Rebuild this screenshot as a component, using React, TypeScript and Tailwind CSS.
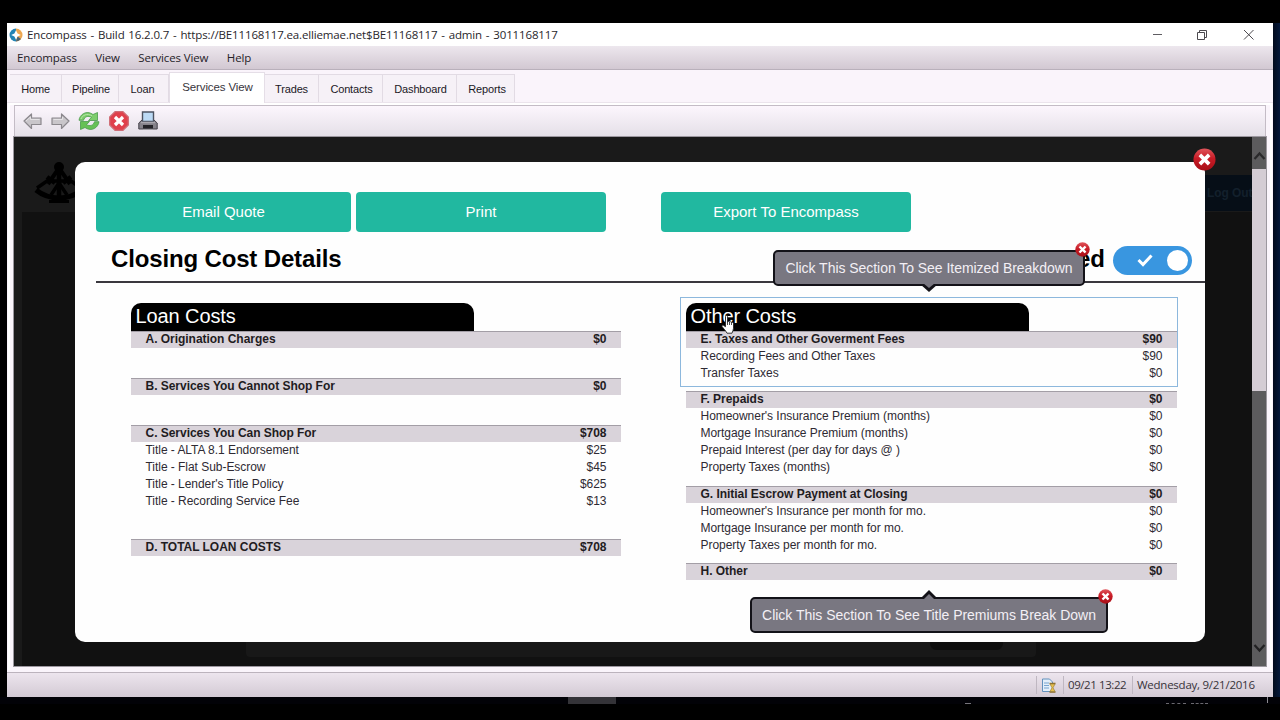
import React from "react";

type Line = { label: string; amount: string };
type Section = { title: string; amount: string; lines: Line[]; box: string };

const loanCosts: Section[] = [
  { title: "A. Origination Charges", amount: "$0", lines: [], box: "h-[47px]" },
  { title: "B. Services You Cannot Shop For", amount: "$0", lines: [], box: "h-[47px]" },
  {
    title: "C. Services You Can Shop For",
    amount: "$708",
    lines: [
      { label: "Title - ALTA 8.1 Endorsement", amount: "$25" },
      { label: "Title - Flat Sub-Escrow", amount: "$45" },
      { label: "Title - Lender's Title Policy", amount: "$625" },
      { label: "Title - Recording Service Fee", amount: "$13" },
    ],
    box: "h-[114px]",
  },
  { title: "D. TOTAL LOAN COSTS", amount: "$708", lines: [], box: "h-[18px]" },
];

const otherCosts: Section[] = [
  {
    title: "E. Taxes and Other Goverment Fees",
    amount: "$90",
    lines: [
      { label: "Recording Fees and Other Taxes", amount: "$90" },
      { label: "Transfer Taxes", amount: "$0" },
    ],
    box: "h-[60px]",
  },
  {
    title: "F. Prepaids",
    amount: "$0",
    lines: [
      { label: "Homeowner's Insurance Premium (months)", amount: "$0" },
      { label: "Mortgage Insurance Premium (months)", amount: "$0" },
      { label: "Prepaid Interest (per day for days @ )", amount: "$0" },
      { label: "Property Taxes (months)", amount: "$0" },
    ],
    box: "h-[95px]",
  },
  {
    title: "G. Initial Escrow Payment at Closing",
    amount: "$0",
    lines: [
      { label: "Homeowner's Insurance per month for mo.", amount: "$0" },
      { label: "Mortgage Insurance per month for mo.", amount: "$0" },
      { label: "Property Taxes per month for mo.", amount: "$0" },
    ],
    box: "h-[77px]",
  },
  { title: "H. Other", amount: "$0", lines: [], box: "h-[18px]" },
];

function CostColumn({ title, sections, width }: { title: string; sections: Section[]; width: string }) {
  return (
    <div className={width}>
      <div className="flex h-[28px] w-[343px] items-center rounded-t-[10px] bg-black pb-[2px] pl-[4.500px] text-[20px] leading-none tracking-[-0.1px] text-white">
        {title}
      </div>
      {sections.map((s) => (
        <div key={s.title} className={s.box}>
          <div className="flex h-[17px] items-center justify-between border-t border-[#a39ea6] bg-[#d9d3da] pr-[14.500px] pb-[1.500px] pl-[14.500px] text-[12px] font-bold tracking-[-0.03px] text-[#1f1c22]">
            <span>{s.title}</span>
            <span>{s.amount}</span>
          </div>
          {s.lines.map((l) => (
            <div key={l.label} className="flex h-[16.8px] items-center justify-between pr-[14.500px] pl-[14.500px] text-[12px] tracking-[-0.04px] text-[#2e2a33]">
              <span>{l.label}</span>
              <span>{l.amount}</span>
            </div>
          ))}
        </div>
      ))}
    </div>
  );
}

function CloseBadge({ className }: { className: string }) {
  return (
    <svg viewBox="0 0 24 24" className={className}>
      <defs>
        <linearGradient id="badge" x1="0" y1="0" x2="0" y2="1">
          <stop offset="0" stopColor="#e0555b" />
          <stop offset="0.45" stopColor="#c81c26" />
          <stop offset="1" stopColor="#a80f18" />
        </linearGradient>
      </defs>
      <circle cx="12" cy="12" r="11.5" fill="url(#badge)" />
      <path d="M8.500 8.500l7 7M15.500 8.500l-7 7" stroke="#fff" strokeWidth="3.800" strokeLinecap="square" />
    </svg>
  );
}

function ToolbarIcons() {
  return (
    <>
      <svg viewBox="0 0 20 20" className="size-[20px]">
        <path d="M1 10l7.500-7v4H18v6.500H8.500v4z" fill="#c9c6ca" stroke="#8b888d" strokeWidth="1.2" strokeLinejoin="round" />
        <path d="M3 10l4.500-4v2.500h9" fill="none" stroke="#e4e2e5" />
      </svg>
      <svg viewBox="0 0 20 20" className="ml-[7px] size-[20px]">
        <path d="M19 10l-7.500-7v4H2v6.500h9.500v4z" fill="#c9c6ca" stroke="#8b888d" strokeWidth="1.2" strokeLinejoin="round" />
        <path d="M3.500 8.500h9V6" fill="none" stroke="#e4e2e5" />
      </svg>
      <svg viewBox="0 0 22 20" className="ml-[8px] h-[20px] w-[22px]">
        <path d="M1 9.300C1.500 4 8-1.500 15 3.500L19.500 1.500V9.500H10.500L13.500 6.300C10 4.500 6.500 5.500 5.500 9.300z" fill="#7dcd6c" stroke="#4a9a4c" strokeWidth="0.8" strokeLinejoin="round" />
        <path d="M21 10.700C20.500 16 14 21.500 7 16.500L2.500 18.500V10.500H11.500L8.500 13.700C12 15.500 15.500 14.500 16.500 10.700z" fill="#66c156" stroke="#4a9a4c" strokeWidth="0.8" strokeLinejoin="round" />
        <path d="M3 8C4.500 4 9 2 14 4.800" fill="none" stroke="#b5e6a9" />
      </svg>
      <svg viewBox="0 0 20 20" className="ml-[9px] size-[20px]">
        <path d="M6 .7h8L19.300 6v8L14 19.300H6L.7 14V6z" fill="#e0404c" stroke="#cf6d76" strokeWidth="1.300" strokeLinejoin="round" />
        <path d="M6 6l8 8M14 6l-8 8" stroke="#fff" strokeWidth="3.200" />
      </svg>
      <svg viewBox="0 0 20 20" className="ml-[9px] size-[20px]">
        <path d="M4 9L.8 12V18h18.400v-6L16 9z" fill="#85828a" stroke="#45424a" />
        <path d="M4.500 1h11v9.500h-11z" fill="#bcdaf5" stroke="#4c5361" strokeWidth="1.400" />
        <path d="M3 11.500h14" stroke="#aaa7ae" strokeWidth="1.500" />
        <path d="M5 14h10v3.500H5z" fill="#242328" />
        <path d="M5 18.500h10" stroke="#a3a1a6" />
      </svg>
    </>
  );
}

function Tab({ label, width }: { label: string; width: string }) {
  return (
    <div className={`mt-[4px] flex h-[28px] items-center justify-center border-t border-r border-[#e2dbe4] bg-[#f6f1f7] pt-[1px] text-[11px] tracking-[-0.15px] text-[#1b181f] ${width}`}>
      {label}
    </div>
  );
}

export default function App() {
  return (
    <div className="relative flex h-[720px] w-[1280px] flex-col overflow-hidden bg-black pt-[23px] font-['Liberation_Sans',sans-serif]">
      <div className="flex h-[674px]">
        <div className="ml-[7px] flex w-[1266px] flex-col bg-[#faf4fb]">
          {/* Title bar */}
          <div className="flex h-[23px] shrink-0 items-center bg-white pl-[2px] font-['Open_Sans','Noto_Sans',sans-serif]">
            <svg viewBox="0 0 14 14" className="size-[14px]">
              <path d="M7 .5A6.500 6.500 0 0 0 .5 7 6.500 6.500 0 0 0 7 13.500z" fill="#2384b4" />
              <path d="M7 .5A6.500 6.500 0 0 1 13.500 7 6.500 6.500 0 0 1 7 13.500z" fill="#eda750" />
              <path d="M7 13.500a6.500 6.500 0 0 0 5-2.400L8 8z" fill="#4d6674" />
              <path d="M7 2.200l1.600 3.200L11.800 7 8.600 8.600 7 11.800 5.400 8.600 2.200 7l3.200-1.600z" fill="#fff" />
            </svg>
            <span className="ml-[4px] text-[11.500px] tracking-[-0.14px] whitespace-pre text-[#28262b] [word-spacing:1px]">Encompass - Build 16.2.0.7 - https://BE11168117.ea.elliemae.net$BE11168117 - admin - 3011168117</span>
            <svg viewBox="0 0 102 12" className="mr-[18px] ml-auto h-[12px] w-[102px]" fill="none" stroke="#4b494e">
              <path d="M-1 5.500h10" stroke="#5f5d62" />
              <path d="M44.500 3.500h7v7h-7zM46.500 3.500v-2h7v7h-2" />
              <path d="M91 1l9.500 9.500M100.500 1L91 10.500" />
            </svg>
          </div>
          {/* Menu bar */}
          <div className="flex h-[24px] shrink-0 items-center gap-[18.500px] border-b border-[#b9b0bb] bg-gradient-to-b from-[#ede7ee] to-[#d2c8d2] pl-[10px] font-['Open_Sans','Noto_Sans',sans-serif] text-[11.500px] tracking-[-0.13px] text-[#252228]">
            <span>Encompass</span>
            <span>View</span>
            <span>Services View</span>
            <span>Help</span>
          </div>
          {/* Tabs */}
          <div className="flex h-[33px] shrink-0 items-start border-b border-[#ebe4ec] pl-[3px]">
            <Tab label="Home" width="w-[52px]" />
            <Tab label="Pipeline" width="w-[57px] pl-[2px]" />
            <Tab label="Loan" width="w-[50px] pr-[2px]" />
            <div className="mt-[2px] flex h-[32px] w-[96px] items-center justify-center border border-b-0 border-[#e5dee7] bg-white pb-[2px] pl-[1px] text-[11.500px] tracking-[-0.12px] text-[#38353c]">
              Services View
            </div>
            <Tab label="Trades" width="w-[54px]" />
            <Tab label="Contacts" width="w-[64px] pl-[2px]" />
            <Tab label="Dashboard" width="w-[74px] pl-[2px]" />
            <Tab label="Reports" width="w-[58px] pl-[3px]" />
          </div>
          {/* Browser frame */}
          <div className="mx-[1px] h-[567px] shrink-0 border-x-2 border-t-2 border-white px-[4px]">
            <div className="flex h-[32px] items-center border border-b-0 border-[#c4bcc6] bg-gradient-to-b from-[#fcf6fd] to-[#e4dfe7] pb-[1px] pl-[8px]">
              <ToolbarIcons />
            </div>
            <div className="relative flex h-[529px] bg-[#111] outline-1 outline-[#9c979f]">
              <div className="relative w-[1238px] overflow-hidden bg-[#1a1a1a]">
                <div className="absolute top-[75px] left-[8px] h-[460px] w-[1240px] bg-[#111]" />
                <div className="absolute top-[500px] left-[232px] h-[20px] w-[790px] rounded-sm bg-[#181818]" />
                <div className="absolute top-[500px] left-[916px] h-[13px] w-[73px] rounded-full bg-[#0e0e0e]" />
                <svg viewBox="0 0 50 42" className="absolute top-[25px] left-[20px] h-[42px] w-[50px]" fill="none" stroke="#000">
                  <path d="M25 6L14 22M25 6l11 16" strokeWidth="4" />
                  <circle cx="25" cy="5" r="3.500" fill="#000" strokeWidth="3" />
                  <path d="M25 5v32M13 15l8 6M37 15l-8 6" strokeWidth="4.500" />
                  <path d="M2 28q10 8 23 8t23-8" strokeWidth="5" />
                  <path d="M3 26l10-7h24l10 7M25 21l-8 12M25 21l8 12" strokeWidth="3.500" />
                  <path d="M15 39.500h20" strokeWidth="3" />
                </svg>
                <div className="absolute top-[38px] left-[1182px] flex h-[36px] w-[60px] items-center bg-[#060e17] pl-[11px] text-[12px] font-bold tracking-[-0.1px] whitespace-nowrap text-[#13202c]">
                  Log Out
                </div>
              </div>
              <div className="flex w-[14px] flex-col items-center bg-[#5c5b5d]">
                <svg viewBox="0 0 14 32" className="h-[32px] w-[14px] shrink-0" fill="none" stroke="#2a292b" strokeWidth="2.200">
                  <path d="M2.500 22L7.500 16.500L12.500 22" />
                </svg>
                <div className="h-[222px] w-[14px] bg-[#d4ccd4]" />
                <svg viewBox="0 0 14 32" className="mt-auto h-[32px] w-[14px] shrink-0" fill="none" stroke="#222123" strokeWidth="2.200">
                  <path d="M2.500 11L7.500 16.500L12.500 11" />
                </svg>
              </div>

              {/* Dialog */}
              <div className="absolute top-[25px] left-[61px] h-[480px] w-[1130px] rounded-[10px] bg-[#fefefe] pt-[30px] pl-[21px] text-black">
                <div className="flex h-[40px] text-[15px] text-white">
                  <div className="flex w-[255px] items-center justify-center rounded-[4px] bg-[#21b8a0]">Email Quote</div>
                  <div className="ml-[5px] flex w-[250px] items-center justify-center rounded-[4px] bg-[#21b8a0]">Print</div>
                  <div className="ml-[55px] flex w-[250px] items-center justify-center rounded-[4px] bg-[#21b8a0]">Export To Encompass</div>
                </div>
                <div className="flex h-[51px] items-center border-b-2 border-[#3a383e] pl-[15px] text-[24px] font-bold">
                  <h1 className="pt-[5px] tracking-[-0.15px]">Closing Cost Details</h1>
                  <span className="ml-auto pt-[5px]">ed</span>
                  <div className="mt-[8px] mr-[13px] ml-[8px] flex h-[29px] w-[79px] items-center rounded-full bg-[#3996e0] pl-[24px]">
                    <svg viewBox="0 0 16 13" className="h-[13px] w-[16px]">
                      <path d="M1.500 6l4.500 4.500L14.500 1.500" fill="none" stroke="#fff" strokeWidth="3" />
                    </svg>
                    <div className="ml-[14px] size-[21px] rounded-full bg-white" />
                  </div>
                </div>
                <div className="flex gap-[65px] pt-[20px] pl-[35px]">
                  <CostColumn title="Loan Costs" sections={loanCosts} width="w-[490px]" />
                  <CostColumn title="Other Costs" sections={otherCosts} width="w-[491px]" />
                </div>

                <div className="absolute top-[135px] left-[605px] h-[90px] w-[498px] border border-[#8db8dd]" />
                <CloseBadge className="absolute top-[-14px] left-[1118px] size-[23px]" />

                <div className="absolute top-[88px] left-[698px] flex h-[36px] w-[312px] items-center justify-center rounded-[5px] border-2 border-[#131218] bg-[#797781] text-[14px] tracking-[-0.04px] whitespace-nowrap text-[#f3eff5]">
                  Click This Section To See Itemized Breakdown
                  <svg viewBox="0 0 20 10" className="absolute top-[31px] left-[144px] h-[10px] w-[20px]">
                    <path d="M1 1h18l-9 8z" fill="#131218" />
                    <path d="M4 0h12l-6 5z" fill="#797781" />
                  </svg>
                  <CloseBadge className="absolute top-[-10px] left-[300px] size-[15px]" />
                </div>

                <div className="absolute top-[435px] left-[675px] flex h-[36px] w-[358px] items-center justify-center rounded-[5px] border-2 border-[#131218] bg-[#797781] text-[14px] tracking-[-0.02px] whitespace-nowrap text-[#f3eff5]">
                  Click This Section To See Title Premiums Break Down
                  <svg viewBox="0 0 20 10" className="absolute top-[-9px] left-[167px] h-[10px] w-[20px]">
                    <path d="M1 9h18L10 0z" fill="#131218" />
                    <path d="M4 10h12l-6-6z" fill="#797781" />
                  </svg>
                  <CloseBadge className="absolute top-[-10px] left-[346px] size-[15px]" />
                </div>

                <svg viewBox="0 0 16 20" className="absolute top-[153px] left-[646px] h-[20px] w-[16px]">
                  <path d="M4.500 1.500c0-1.300 2-1.300 2 0V7l1-.5 1 .5 1-.3 1 .7 1-.2 1 1v5c0 2-1 3-1.500 5H6C5 16 2 13 1 11.500c-.5-1.200 1-1.800 2-.8l1.500 1z" fill="#fff" stroke="#222" strokeWidth="0.9" />
                  <path d="M6.500 7v3M8.500 7v3M10.500 7.500V10" stroke="#222" strokeWidth="0.800" />
                </svg>
              </div>
            </div>
          </div>
          {/* Status bar */}
          <div className="mt-auto flex h-[25px] shrink-0 items-center border-t border-[#bcb3bd] bg-gradient-to-b from-[#ede5ee] to-[#d3cad4] font-['Open_Sans','Noto_Sans',sans-serif] text-[11.500px] whitespace-nowrap text-[#37333a]">
            <div className="ml-auto h-[18px] w-px bg-[#bfb7c1]" />
            <svg viewBox="0 0 15 15" className="ml-[4px] size-[15px]">
              <path d="M1.500 1h7l3 3v9.500h-10z" fill="#e4effa" stroke="#6391bd" />
              <path d="M3 5h5M3 7.500h5M3 10h5" stroke="#79a5d0" />
              <path d="M8.500 5.500h6M8.500 14h6" stroke="#8a6b28" strokeWidth="1.300" />
              <path d="M9 6h5l-2 3.800 2 3.700H9l2-3.700z" fill="#e8c04d" stroke="#9b813c" strokeWidth="0.700" />
            </svg>
            <div className="ml-[7px] h-[18px] w-px bg-[#bfb7c1]" />
            <span className="w-[68px] pl-[4px] tracking-[-0.42px]">09/21 13:22</span>
            <div className="h-[18px] w-px bg-[#bfb7c1]" />
            <span className="w-[140px] pl-[4px] tracking-[-0.25px]">Wednesday, 9/21/2016</span>
          </div>
        </div>
        <div className="w-[7px] bg-gradient-to-r from-[#020b1c] to-[#04183a]" />
      </div>
      {/* Sliver of the desktop taskbar */}
      <div className="flex h-[7px] bg-[#020207] pl-[568px]">
        <div className="h-[7px] w-[48px] bg-[#343338]" />
        <div className="mt-[6px] ml-[349px] h-px w-[6px] bg-[#77757c]" />
        <div className="mt-[6px] ml-[195px] h-px w-[20px] border-t border-dashed border-[#6b6970]" />
        <div className="mt-[6px] ml-[5px] h-px w-[17px] border-t border-dashed border-[#6b6970]" />
        <div className="ml-[59px] h-[6px] w-px bg-[#8d8b92]" />
      </div>
    </div>
  );
}
